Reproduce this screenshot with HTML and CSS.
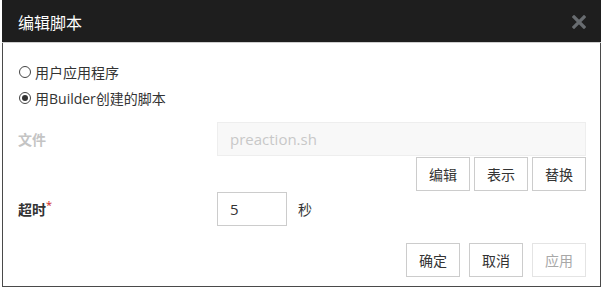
FILE: index.html
```html
<!DOCTYPE html>
<html lang="zh-CN">

<head>
    <meta charset="UTF-8" />
    <title>编辑脚本</title>
    <link rel="stylesheet" href="styles.css">
</head>

<body>
    <div class="dialog">
        <div class="dialog-header">
            <span class="dialog-title">编辑脚本</span>
            <span class="close-btn">
                <svg width="14" height="14" viewBox="0 0 14 14">
                    <path d="M2 2 L12 12 M12 2 L2 12" stroke="#686c70" stroke-width="3.2" stroke-linecap="square" />
                </svg>
            </span>
        </div>
        <div class="dialog-body">
            <div class="radio-row">
                <span class="radio"></span>
                <span>用户应用程序</span>
            </div>
            <div class="radio-row">
                <span class="radio checked"></span>
                <span>用Builder创建的脚本</span>
            </div>

            <div class="form-row">
                <span class="label disabled">文件</span>
                <div class="text-input file-input">preaction.sh</div>
            </div>
            <div class="btn-row">
                <button class="btn">编辑</button>
                <button class="btn">表示</button>
                <button class="btn">替换</button>
            </div>
            <div class="form-row timeout-row">
                <span class="label">超时<sup class="req">*</sup></span>
                <div class="text-input num-input">5</div>
                <span class="unit">秒</span>
            </div>

            <div class="btn-row footer">
                <button class="btn">确定</button>
                <button class="btn">取消</button>
                <button class="btn" disabled>应用</button>
            </div>
        </div>
    </div>
</body>

</html>
```

FILE: styles.css
```css
body {
    margin: 0;
    background-color: #fff;
    font-family: "Open Sans", "Noto Sans CJK SC", sans-serif;
    font-size: 14px;
    color: #333;
}

.dialog {
    width: 599px;
    height: 287px;
    margin-left: 2px;
    box-sizing: border-box;
    border: 1px solid #4a4a4a;
    border-top: none;
}

.dialog-header {
    height: 42px;
    margin: 0 -1px;
    padding: 0 15px 0 16px;
    display: flex;
    align-items: center;
    justify-content: space-between;
    background-color: #1e1e1e;
    border-bottom: 1px solid #cfcfcf;
}

.dialog-title {
    color: #fff;
    font-size: 16px;
    padding-top: 2px;
}

.close-btn {
    display: flex;
    padding-top: 2px;
}

.dialog-body {
    padding: 16px 14px 0 15px;
}

.radio-row {
    display: flex;
    align-items: center;
    height: 26px;
    gap: 4px;
}

.radio {
    width: 12px;
    height: 12px;
    box-sizing: border-box;
    border: 1px solid #444;
    border-radius: 50%;
    display: flex;
    align-items: center;
    justify-content: center;
    margin-left: 1px;
}

.radio.checked::after {
    content: "";
    width: 6px;
    height: 6px;
    border-radius: 50%;
    background-color: #333;
}

.form-row {
    display: flex;
    align-items: center;
    margin-top: 11px;
}

.label {
    width: 199px;
    font-weight: bold;
}

.label.disabled {
    color: #c4c4c4;
}

.req {
    color: #cc2222;
    font-size: 11px;
    font-weight: normal;
    vertical-align: 6px;
    line-height: 0;
}

.text-input {
    height: 34px;
    box-sizing: border-box;
    border: 1px solid #ccc;
    padding: 0 12px;
    display: flex;
    align-items: center;
    font-size: 15px;
}

.file-input {
    flex: 1;
    background-color: #f8f8f8;
    border-color: #eeeeee;
    color: #c8c8c8;
}

.num-input {
    width: 70px;
}

.unit {
    margin-left: 11px;
}

.timeout-row {
    margin-top: 1px;
}

.btn-row {
    display: flex;
    justify-content: flex-end;
    gap: 4px;
    margin-top: 1px;
}

.btn {
    width: 54px;
    height: 34px;
    padding: 0;
    background-color: #fff;
    border: 1px solid #ccc;
    font-family: inherit;
    font-size: 14px;
    color: #333;
}

.btn:disabled {
    color: #a8a8a8;
    border-color: #e4e4e4;
}

.footer {
    gap: 9px;
    margin-top: 17px;
}
```
